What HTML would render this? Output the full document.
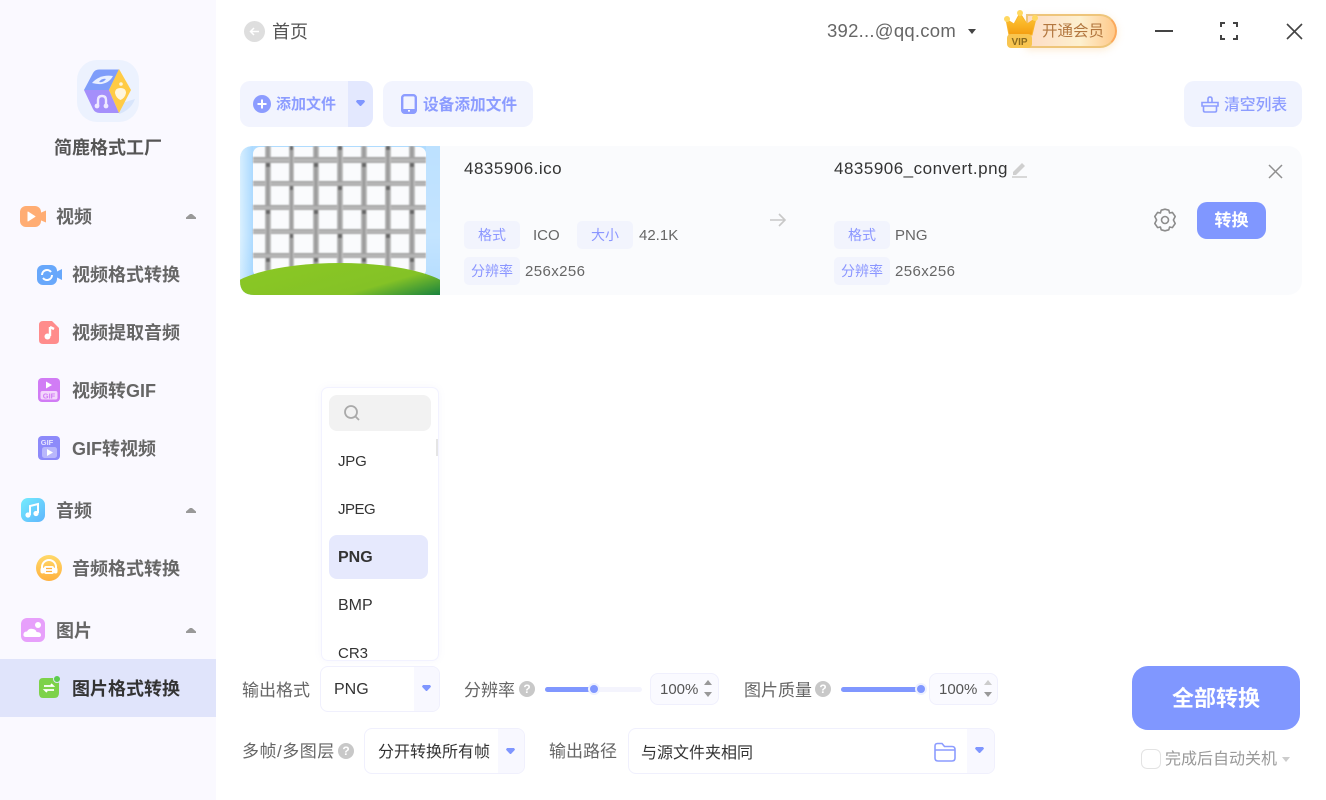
<!DOCTYPE html>
<html><head><meta charset="utf-8"><style>
html,body{margin:0;padding:0}
body{width:1326px;height:800px;overflow:hidden;background:#fff;position:relative;font-family:"Liberation Sans","Noto Sans CJK SC",sans-serif;color:#333}
.a{position:absolute;white-space:nowrap}
.t{position:absolute;white-space:nowrap;line-height:20px;height:20px}
.m{font-size:18px;font-weight:700;color:#666}
.s{font-size:18px;font-weight:700;color:#666}
.tag{position:absolute;height:28px;line-height:28px;background:#f2f4fd;border-radius:5px;color:#8b96ff;font-size:14px;text-align:center;width:56px}
.v{position:absolute;font-size:15px;color:#666;line-height:30px;height:28px;white-space:nowrap}
.lab{position:absolute;font-size:17px;color:#666;line-height:24px;white-space:nowrap}
.tri{position:absolute;width:0;height:0;border-left:5px solid transparent;border-right:5px solid transparent}
.dn{position:absolute;width:9px;height:6px;background:#7f96ff;clip-path:polygon(10% 0,90% 0,100% 30%,55% 100%,45% 100%,0 30%)}
.up{position:absolute;width:10px;height:5px;background:#999;clip-path:polygon(40% 0,60% 0,100% 70%,100% 100%,0 100%,0 70%)}
.box{position:absolute;box-sizing:border-box;border:1px solid #f0f0fd;border-radius:8px;background:#fff}
.q{position:absolute;width:16px;height:16px;border-radius:50%;background:#c8c8c8;color:#fff;font-size:12px;font-weight:700;line-height:16px;text-align:center}
svg{position:absolute;overflow:visible}
</style></head><body>

<!-- Sidebar -->
<div class="a" style="left:0;top:0;width:216px;height:800px;background:#faf9ff"></div>
<div class="a" style="left:0;top:659px;width:216px;height:58px;background:#e0e4fb"></div>

<!-- Logo -->
<svg style="left:77px;top:60px" width="62" height="62" viewBox="0 0 62 62">
<defs><clipPath id="lc"><rect width="62" height="62" rx="20"/></clipPath></defs>
<rect width="62" height="62" rx="20" fill="#ecf2fe"/>
<path d="M42 44L58 39Q54 50 42 54Z" fill="#d8e5fb" clip-path="url(#lc)"/>
<path d="M7 30L16 13Q18 9.500 22 9.500H42L32 30Z" fill="#7e9dfa"/>
<path d="M7 30H32L42 53H23Q18 53 16 49Z" fill="#a58ffb"/>
<path d="M42 9L54 30L42 53L32 30Z" fill="#ffcb45"/>
<path d="M15 23Q23 14 36 16Q30 27 15 23Z" fill="#e8f0ff"/>
<path d="M22 22Q25 18 29 19Q26 23 22 22Z" fill="#7e9dfa"/>
<path d="M21 46V40Q21 36 25 36Q29 36 29 40V46" fill="none" stroke="#eee8ff" stroke-width="2.400"/>
<circle cx="20" cy="46" r="2.400" fill="#eee8ff"/><circle cx="29" cy="46" r="2.400" fill="#eee8ff"/>
<path d="M43.500 28Q49 28 49 33Q48 38 43.500 40Q39 38 38 33Q38 28 43.500 28Z" fill="#fff6dc"/>
<circle cx="44" cy="24" r="1.800" fill="#fff6dc"/>
</svg>
<div class="t" style="left:54px;top:138px;font-size:18px;font-weight:700;color:#555">简鹿格式工厂</div>

<!-- Section: video -->
<svg style="left:20px;top:206px" width="26" height="22" viewBox="0 0 26 22">
<rect x="0" y="0" width="21" height="21" rx="6" fill="#ffad73"/><path d="M20 7L26 4.500V16.500L20 14Z" fill="#ffad73"/><path d="M8 6L15 10.500L8 15Z" fill="#fff" stroke="#fff" stroke-linejoin="round"/></svg>
<div class="t m" style="left:56px;top:207px">视频</div>
<div class="up" style="left:186px;top:214px"></div>

<svg style="left:37px;top:265px" width="26" height="20" viewBox="0 0 26 20">
<rect x="0" y="0" width="20" height="20" rx="6" fill="#68a8fb"/><path d="M19 7L25 4V15L19 12Z" fill="#68a8fb"/>
<path d="M5 10A5 5 0 0 1 14 7M15 10A5 5 0 0 1 6 13" fill="none" stroke="#fff" stroke-width="2"/></svg>
<div class="t s" style="left:72px;top:265px">视频格式转换</div>

<svg style="left:39px;top:321px" width="20" height="23" viewBox="0 0 20 23">
<path d="M4 0H13L20 7V19Q20 23 16 23H4Q0 23 0 19V4Q0 0 4 0Z" fill="#ff8c8c"/>
<path d="M11 6V15" stroke="#fff" stroke-width="2.400"/><circle cx="8.500" cy="15.500" r="3" fill="#fff"/><path d="M11 6L15 8" stroke="#fff" stroke-width="2.400"/></svg>
<div class="t s" style="left:72px;top:323px">视频提取音频</div>

<svg style="left:38px;top:378px" width="22" height="24" viewBox="0 0 22 24">
<rect width="22" height="24" rx="4" fill="#d17cf5"/><path d="M8 3.500L14 7L8 10.500Z" fill="#fff"/><rect x="2.500" y="13" width="17" height="8.500" rx="2" fill="#f3d6fc"/>
<text x="11" y="20.500" font-size="7.500" font-weight="700" fill="#d17cf5" text-anchor="middle" font-family="Liberation Sans">GIF</text></svg>
<div class="t s" style="left:72px;top:381px">视频转GIF</div>

<svg style="left:38px;top:436px" width="22" height="24" viewBox="0 0 22 24">
<rect width="22" height="24" rx="4" fill="#8d8afa"/><text x="9" y="9" font-size="7.500" font-weight="700" fill="#e8e6ff" text-anchor="middle" font-family="Liberation Sans">GIF</text><rect x="4" y="11" width="15" height="11" rx="2.500" fill="#b9b7fc"/><path d="M9 13L15 16.500L9 20Z" fill="#fff"/></svg>
<div class="t s" style="left:72px;top:439px">GIF转视频</div>

<!-- Section: audio -->
<svg style="left:21px;top:498px" width="24" height="24" viewBox="0 0 24 24">
<defs><linearGradient id="g1" x1="0" y1="0" x2="1" y2="1"><stop offset="0" stop-color="#74ecfd"/><stop offset="1" stop-color="#5fb5fd"/></linearGradient></defs>
<rect width="24" height="24" rx="7" fill="url(#g1)"/><path d="M9 17V8L17 6V15" fill="none" stroke="#fff" stroke-width="2"/><circle cx="7" cy="17" r="2.600" fill="#fff"/><circle cx="15" cy="15.500" r="2.600" fill="#fff"/></svg>
<div class="t m" style="left:56px;top:501px">音频</div>
<div class="up" style="left:186px;top:508px"></div>

<svg style="left:36px;top:555px" width="26" height="26" viewBox="0 0 26 26">
<defs><linearGradient id="g2" x1="0" y1="0" x2="0" y2="1"><stop offset="0" stop-color="#ffd96a"/><stop offset="1" stop-color="#ffb13f"/></linearGradient></defs>
<circle cx="13" cy="13" r="13" fill="url(#g2)"/>
<path d="M6 14V12A7 7 0 0 1 20 12V14" fill="none" stroke="#fff" stroke-width="2"/><rect x="4.500" y="12.500" width="4" height="6" rx="2" fill="#fff"/><rect x="17.500" y="12.500" width="4" height="6" rx="2" fill="#fff"/><rect x="8" y="11" width="10" height="8" rx="2" fill="#fff"/><path d="M10 13.500H16M10 16.500H16" stroke="#ffb13f" stroke-width="1.200"/></svg>
<div class="t s" style="left:72px;top:559px">音频格式转换</div>

<!-- Section: image -->
<svg style="left:21px;top:618px" width="24" height="24" viewBox="0 0 24 24">
<rect width="24" height="24" rx="6" fill="#e7a0fb"/><circle cx="17" cy="7" r="3" fill="#fff"/><path d="M5 19Q2 19 2.500 16Q3 13.500 6 13.500Q8 10 12 11Q15 11.500 15.500 14Q20 14 20 17Q20 19 18 19Z" fill="#fff"/></svg>
<div class="t m" style="left:56px;top:621px">图片</div>
<div class="up" style="left:186px;top:628px"></div>

<svg style="left:38px;top:676px" width="23" height="23" viewBox="0 0 23 23">
<path d="M5 2H21V17Q21 22 16 22H5Q1 22 1 17V6Q1 2 5 2Z" fill="#7dd249"/><circle cx="19" cy="3" r="3.500" fill="#5ccc4e" stroke="#e0e4fb" stroke-width="1"/>
<path d="M6 10H15L13 8M16 14H7L9 16" fill="none" stroke="#fff" stroke-width="1.800"/></svg>
<div class="t" style="left:72px;top:679px;font-size:18px;font-weight:700;color:#333">图片格式转换</div>

<!-- Top bar -->
<svg style="left:244px;top:21px" width="21" height="21" viewBox="0 0 21 21"><circle cx="10.500" cy="10.500" r="10.500" fill="#dedede"/><path d="M15 10.500H6.500M10 7L6.500 10.500L10 14" fill="none" stroke="#fff" stroke-width="1.500"/></svg>
<div class="t" style="left:272px;top:22px;font-size:18px;color:#555">首页</div>
<div class="t" style="left:827px;top:21px;font-size:18.500px;color:#666;letter-spacing:.25px">392...@qq.com</div>
<div class="tri" style="left:967.500px;top:29px;border-left-width:4.500px;border-right-width:4.500px;border-top:5px solid #444"></div>

<!-- VIP -->
<div class="a" style="left:1026px;top:14px;width:91px;height:34px;box-sizing:border-box;border-radius:0 17px 17px 0;border:2px solid #eec57a;border-right-color:#fba95b;background:linear-gradient(90deg,#fddcc6 0%,#fdf0cf 60%,#ffc98a 100%);box-shadow:0 2px 8px rgba(250,190,110,.3)"></div>
<div class="t" style="left:1042px;top:22px;font-size:15.500px;color:#b3773f">开通会员</div>
<svg style="left:1003px;top:9px" width="36" height="40" viewBox="0 0 36 40">
<defs><linearGradient id="cr" x1="0" y1="0" x2="0" y2="1"><stop offset="0" stop-color="#ffcd3c"/><stop offset="1" stop-color="#f49d10"/></linearGradient></defs>
<path d="M3 10L11 15L17 4L24 15L33 9L29 26H6Z" fill="url(#cr)" stroke="#f9b52b" stroke-width="1"/>
<circle cx="4" cy="10" r="3" fill="#ffd860"/><circle cx="17" cy="4" r="3" fill="#ffd860"/><circle cx="32" cy="9" r="3" fill="#ffd860"/>
<rect x="4" y="25" width="25" height="14" rx="4" fill="#f8c550"/>
<text x="16.500" y="36" font-size="10" font-weight="700" fill="#8a6a1f" text-anchor="middle" font-family="Liberation Sans">VIP</text></svg>

<!-- window controls -->
<div class="a" style="left:1155px;top:30px;width:18px;height:2px;background:#444"></div>
<svg style="left:1220px;top:22px" width="18" height="18" viewBox="0 0 18 18"><path d="M1 5V1H5M13 1H17V5M17 13V17H13M5 17H1V13" fill="none" stroke="#444" stroke-width="2"/></svg>
<svg style="left:1286px;top:23px" width="17" height="17" viewBox="0 0 17 17"><path d="M1 1L16 16M16 1L1 16" stroke="#444" stroke-width="1.600"/></svg>

<!-- Toolbar -->
<div class="a" style="left:240px;top:81px;width:133px;height:46px;background:#f2f4fe;border-radius:10px;overflow:hidden"><div class="a" style="left:108px;top:0;width:25px;height:46px;background:#e3e8fe"></div></div>
<svg style="left:253px;top:95px" width="18" height="18" viewBox="0 0 18 18"><circle cx="9" cy="9" r="9" fill="#8c9cff"/><path d="M4.500 9H13.500M9 4.500V13.500" stroke="#fff" stroke-width="2"/></svg>
<div class="t" style="left:276px;top:95px;font-size:15px;font-weight:700;color:#8c9cff">添加文件</div>
<div class="dn" style="left:356px;top:100px"></div>

<div class="a" style="left:383px;top:81px;width:150px;height:46px;background:#f2f4fe;border-radius:10px"></div>
<svg style="left:401px;top:94px" width="16" height="20" viewBox="0 0 16 20"><rect x="1.200" y="1.200" width="13.600" height="17.600" rx="2.500" fill="none" stroke="#8c9cff" stroke-width="2.400"/><rect x="1" y="15" width="14" height="4" fill="#8c9cff"/><rect x="7" y="16" width="2" height="1.600" fill="#fff"/></svg>
<div class="t" style="left:423px;top:96px;font-size:15.700px;font-weight:700;color:#8c9cff">设备添加文件</div>

<div class="a" style="left:1184px;top:81px;width:118px;height:46px;background:#f0f3fe;border-radius:10px"></div>
<svg style="left:1201px;top:96px" width="18" height="17" viewBox="0 0 18 17"><path d="M7 6V3Q7 1 9 1Q11 1 11 3V6M1 6.500H17V10H1ZM2.500 10V14.500Q2.500 16 4 16H14Q15.500 16 15.500 14.500V10" fill="none" stroke="#8c9cff" stroke-width="1.600"/></svg>
<div class="t" style="left:1224px;top:96px;font-size:15.800px;font-weight:500;color:#8c9cff">清空列表</div>

<!-- File row -->
<div class="a" style="left:240px;top:146px;width:1062px;height:149px;background:#fafbfd;border-radius:14px"></div>
<svg style="left:240px;top:146px" width="200" height="149" viewBox="0 0 200 149">
<defs>
<clipPath id="tc"><path d="M14 0H200V149H14Q0 149 0 135V14Q0 0 14 0Z"/></clipPath>
<linearGradient id="sky" x1="0" y1="0" x2="0" y2="1"><stop offset="0" stop-color="#b0dcff"/><stop offset=".6" stop-color="#c8e7ff"/><stop offset="1" stop-color="#8ccbfb"/></linearGradient>
<linearGradient id="vb" x1="0" y1="0" x2="1" y2="0"><stop offset="0" stop-color="#bdbdbd"/><stop offset=".5" stop-color="#949494"/><stop offset="1" stop-color="#c6c6c6"/></linearGradient>
<linearGradient id="hb" x1="0" y1="0" x2="0" y2="1"><stop offset="0" stop-color="#9a9a9a"/><stop offset=".5" stop-color="#bcbcbc"/><stop offset="1" stop-color="#a4a4a4"/></linearGradient>
<linearGradient id="hill" x1="0" y1="0" x2="1" y2="1"><stop offset="0" stop-color="#8cc924"/><stop offset=".5" stop-color="#84c226"/><stop offset=".72" stop-color="#14803f"/></linearGradient>
<linearGradient id="sideL" x1="0" y1="0" x2="1" y2="0"><stop offset="0" stop-color="#e0f3ff"/><stop offset="1" stop-color="#a8d8ff"/></linearGradient>
<filter id="bl" x="-5%" y="-5%" width="110%" height="110%"><feGaussianBlur stdDeviation=".7"/></filter>
</defs>
<g clip-path="url(#tc)">
<rect width="200" height="149" fill="url(#sky)"/>
<rect x="0" y="0" width="13" height="149" fill="url(#sideL)" opacity=".8"/>
<rect x="13" y="1" width="173" height="130" rx="7" fill="#fafbfd"/>
<g filter="url(#bl)">
<g fill="url(#hb)">
<rect x="13" y="11" width="173" height="6"/><rect x="13" y="35" width="173" height="5"/><rect x="13" y="59" width="173" height="5"/><rect x="13" y="83" width="173" height="5"/><rect x="13" y="107" width="173" height="5"/>
</g>
<g fill="url(#vb)">
<rect x="25" y="0" width="6" height="11"/><rect x="25" y="17" width="6" height="42"/><rect x="25" y="64" width="6" height="43"/><rect x="25" y="112" width="6" height="13"/>
<rect x="49" y="0" width="5" height="35"/><rect x="49" y="40" width="5" height="43"/><rect x="49" y="88" width="5" height="37"/>
<rect x="73" y="0" width="6" height="11"/><rect x="73" y="17" width="6" height="42"/><rect x="73" y="64" width="6" height="43"/><rect x="73" y="112" width="6" height="13"/>
<rect x="97" y="0" width="6" height="35"/><rect x="97" y="40" width="6" height="43"/><rect x="97" y="88" width="6" height="37"/>
<rect x="121" y="0" width="6" height="11"/><rect x="121" y="17" width="6" height="42"/><rect x="121" y="64" width="6" height="43"/><rect x="121" y="112" width="6" height="13"/>
<rect x="145" y="0" width="6" height="35"/><rect x="145" y="40" width="6" height="43"/><rect x="145" y="88" width="6" height="37"/>
<rect x="169" y="0" width="6" height="11"/><rect x="169" y="17" width="6" height="42"/><rect x="169" y="64" width="6" height="43"/><rect x="169" y="112" width="6" height="13"/>
</g>
<path d="M26 17h4v4h-4zM74 17h4v4h-4zM122 17h4v4h-4zM170 17h4v4h-4zM26 64h4v4h-4zM74 64h4v4h-4zM122 64h4v4h-4zM170 64h4v4h-4zM26 112h4v4h-4zM74 112h4v4h-4zM122 112h4v4h-4zM170 112h4v4h-4zM50 40h3v4h-3zM98 40h4v4h-4zM146 40h4v4h-4zM50 88h3v4h-3zM98 88h4v4h-4zM146 88h4v4h-4zM50 0h3v4h-3zM98 0h4v4h-4zM146 0h4v4h-4z" fill="#666"/>
</g>
<rect x="186" y="0" width="14" height="149" fill="#c2e3ff" opacity=".7"/>
<ellipse cx="100" cy="150" rx="115" ry="33" fill="url(#hill)"/>
</g></svg>

<div class="t" style="left:464px;top:159px;font-size:17px;color:#333;letter-spacing:.5px">4835906.ico</div>
<div class="tag" style="left:464px;top:221px">格式</div>
<div class="v" style="left:533px;top:221px">ICO</div>
<div class="tag" style="left:577px;top:221px">大小</div>
<div class="v" style="left:639px;top:221px">42.1K</div>
<div class="tag" style="left:464px;top:257px">分辨率</div>
<div class="v" style="left:525px;top:257px;letter-spacing:.4px">256x256</div>

<svg style="left:769px;top:212px" width="18" height="16" viewBox="0 0 18 16"><path d="M1 8H16M10 2L16 8L10 14" fill="none" stroke="#c8c8c8" stroke-width="1.600"/></svg>

<div class="t" style="left:834px;top:159px;font-size:17px;color:#333;letter-spacing:.5px">4835906_convert.png</div>
<svg style="left:1012px;top:161px" width="16" height="17" viewBox="0 0 16 17"><path d="M1 11L10 2L13 5L4 14H1Z" fill="#cfcfcf"/><rect x="0" y="15" width="15" height="2" fill="#d8d8d8"/></svg>
<div class="tag" style="left:834px;top:221px">格式</div>
<div class="v" style="left:895px;top:221px">PNG</div>
<div class="tag" style="left:834px;top:257px">分辨率</div>
<div class="v" style="left:895px;top:257px;letter-spacing:.4px">256x256</div>

<svg style="left:1268px;top:164px" width="15" height="15" viewBox="0 0 15 15"><path d="M1 1L14 14M14 1L1 14" stroke="#8f8f8f" stroke-width="1.500"/></svg>
<svg style="left:1153px;top:208px" width="24" height="24" viewBox="0 0 24 24"><path d="M8.200 2.200L12 1.200L15.800 2.200L16.600 5L19.400 4.400L22.200 8.500L20.400 12L22.200 15.500L19.400 19.600L16.600 19L15.800 21.800L12 22.800L8.200 21.800L7.400 19L4.600 19.600L1.800 15.500L3.600 12L1.800 8.500L4.600 4.400L7.400 5Z" fill="none" stroke="#8c8c8c" stroke-width="1.600" stroke-linejoin="round"/><circle cx="12" cy="12" r="3.500" fill="none" stroke="#8c8c8c" stroke-width="1.600"/></svg>
<div class="a" style="left:1197px;top:202px;width:69px;height:37px;line-height:38px;background:#8097ff;border-radius:10px;color:#fff;font-size:17px;font-weight:700;text-align:center">转换</div>

<!-- Dropdown -->
<div class="a" style="left:321px;top:387px;width:118px;height:274px;box-sizing:border-box;border:1px solid #f2f2ff;border-radius:7px;background:#fff;box-shadow:0 0 8px rgba(120,120,220,.06);overflow:hidden">
  <div class="a" style="left:7px;top:7px;width:102px;height:36px;background:#f2f2f2;border-radius:8px"></div>
  <div class="a" style="left:114px;top:51px;width:4px;height:17px;background:#e5e5e5"></div>
  <div class="a" style="left:7px;top:147px;width:99px;height:44px;background:#e6e9fd;border-radius:8px"></div>
  <div class="a" style="left:16px;top:62px;font-size:15px;line-height:24px;color:#333;letter-spacing:-.2px">JPG</div>
  <div class="a" style="left:16px;top:110px;font-size:15px;line-height:24px;color:#333;letter-spacing:-.5px">JPEG</div>
  <div class="a" style="left:16px;top:158px;font-size:16px;line-height:24px;color:#333;font-weight:700">PNG</div>
  <div class="a" style="left:16px;top:206px;font-size:16px;line-height:24px;color:#333">BMP</div>
  <div class="a" style="left:16px;top:254px;font-size:15px;line-height:24px;color:#333">CR3</div>
</div>
<svg style="left:343px;top:404px" width="18" height="18" viewBox="0 0 18 18"><circle cx="8" cy="8" r="6" fill="none" stroke="#aaa" stroke-width="1.800"/><path d="M12.500 12.500L16 16" stroke="#aaa" stroke-width="1.800"/></svg>

<!-- Bottom row 1 -->
<div class="lab" style="left:242px;top:679px">输出格式</div>
<div class="box" style="left:320px;top:666px;width:120px;height:46px;overflow:hidden"><div class="a" style="left:93px;top:0;width:26px;height:46px;background:#f8f8ff"></div></div>
<div class="a" style="left:334px;top:678px;font-size:16px;line-height:24px;color:#333">PNG</div>
<div class="dn" style="left:422px;top:685px"></div>

<div class="lab" style="left:464px;top:679px">分辨率</div>
<div class="q" style="left:519px;top:681px">?</div>
<div class="a" style="left:545px;top:687px;width:97px;height:5px;background:#f4f4fd;border-radius:3px"></div>
<div class="a" style="left:545px;top:687px;width:49px;height:5px;background:#8097ff;border-radius:3px"></div>
<div class="a" style="left:590px;top:685px;width:8px;height:8px;border-radius:50%;background:#8097ff;box-shadow:0 0 0 2px #eef1ff"></div>
<div class="box" style="left:650px;top:673px;width:69px;height:32px;background:#fafaff"></div>
<div class="a" style="left:660px;top:680px;font-size:15px;line-height:20px;color:#555">100%</div>
<div class="tri" style="left:704px;top:680px;border-left-width:4px;border-right-width:4px;border-bottom:5px solid #999"></div>
<div class="tri" style="left:704px;top:692px;border-left-width:4px;border-right-width:4px;border-top:5px solid #999"></div>

<div class="lab" style="left:744px;top:679px">图片质量</div>
<div class="q" style="left:815px;top:681px">?</div>
<div class="a" style="left:841px;top:687px;width:80px;height:5px;background:#8097ff;border-radius:3px"></div>
<div class="a" style="left:917px;top:685px;width:8px;height:8px;border-radius:50%;background:#8097ff;box-shadow:0 0 0 2px #eef1ff"></div>
<div class="box" style="left:929px;top:673px;width:69px;height:32px;background:#fafaff"></div>
<div class="a" style="left:939px;top:680px;font-size:15px;line-height:20px;color:#555">100%</div>
<div class="tri" style="left:984px;top:680px;border-left-width:4px;border-right-width:4px;border-bottom:5px solid #ccc"></div>
<div class="tri" style="left:984px;top:692px;border-left-width:4px;border-right-width:4px;border-top:5px solid #999"></div>

<!-- Bottom row 2 -->
<div class="lab" style="left:242px;top:740px;letter-spacing:.5px">多帧/多图层</div>
<div class="q" style="left:338px;top:743px">?</div>
<div class="box" style="left:364px;top:728px;width:161px;height:46px;overflow:hidden"><div class="a" style="left:133px;top:0;width:27px;height:46px;background:#f8f8ff"></div></div>
<div class="a" style="left:378px;top:741px;font-size:16px;line-height:24px;color:#333">分开转换所有帧</div>
<div class="dn" style="left:506px;top:748px"></div>

<div class="lab" style="left:549px;top:740px">输出路径</div>
<div class="box" style="left:628px;top:728px;width:367px;height:46px;overflow:hidden"><div class="a" style="left:338px;top:0;width:28px;height:46px;background:#f8f8ff"></div></div>
<div class="a" style="left:641px;top:742px;font-size:16px;line-height:24px;color:#333">与源文件夹相同</div>
<svg style="left:934px;top:742px" width="22" height="20" viewBox="0 0 22 20"><path d="M1 16V4Q1 1.500 3.500 1.500H8L10.500 4.500H18Q21 4.500 21 7.500V16Q21 19 18 19H4Q1 19 1 16ZM1 8H21" fill="none" stroke="#8c9cff" stroke-width="1.600"/></svg>
<div class="dn" style="left:975px;top:747px"></div>

<!-- Convert all -->
<div class="a" style="left:1132px;top:666px;width:168px;height:64px;line-height:66px;background:#8097ff;border-radius:16px;color:#fff;font-size:22px;font-weight:700;text-align:center">全部转换</div>
<div class="a" style="left:1141px;top:749px;width:20px;height:20px;box-sizing:border-box;border:1px solid #e3e3e3;border-radius:6px;background:#fff"></div>
<div class="a" style="left:1165px;top:750px;font-size:16px;line-height:20px;color:#999">完成后自动关机</div>
<div class="tri" style="left:1282px;top:757px;border-left-width:4px;border-right-width:4px;border-top:5px solid #ccc"></div>

</body></html>
